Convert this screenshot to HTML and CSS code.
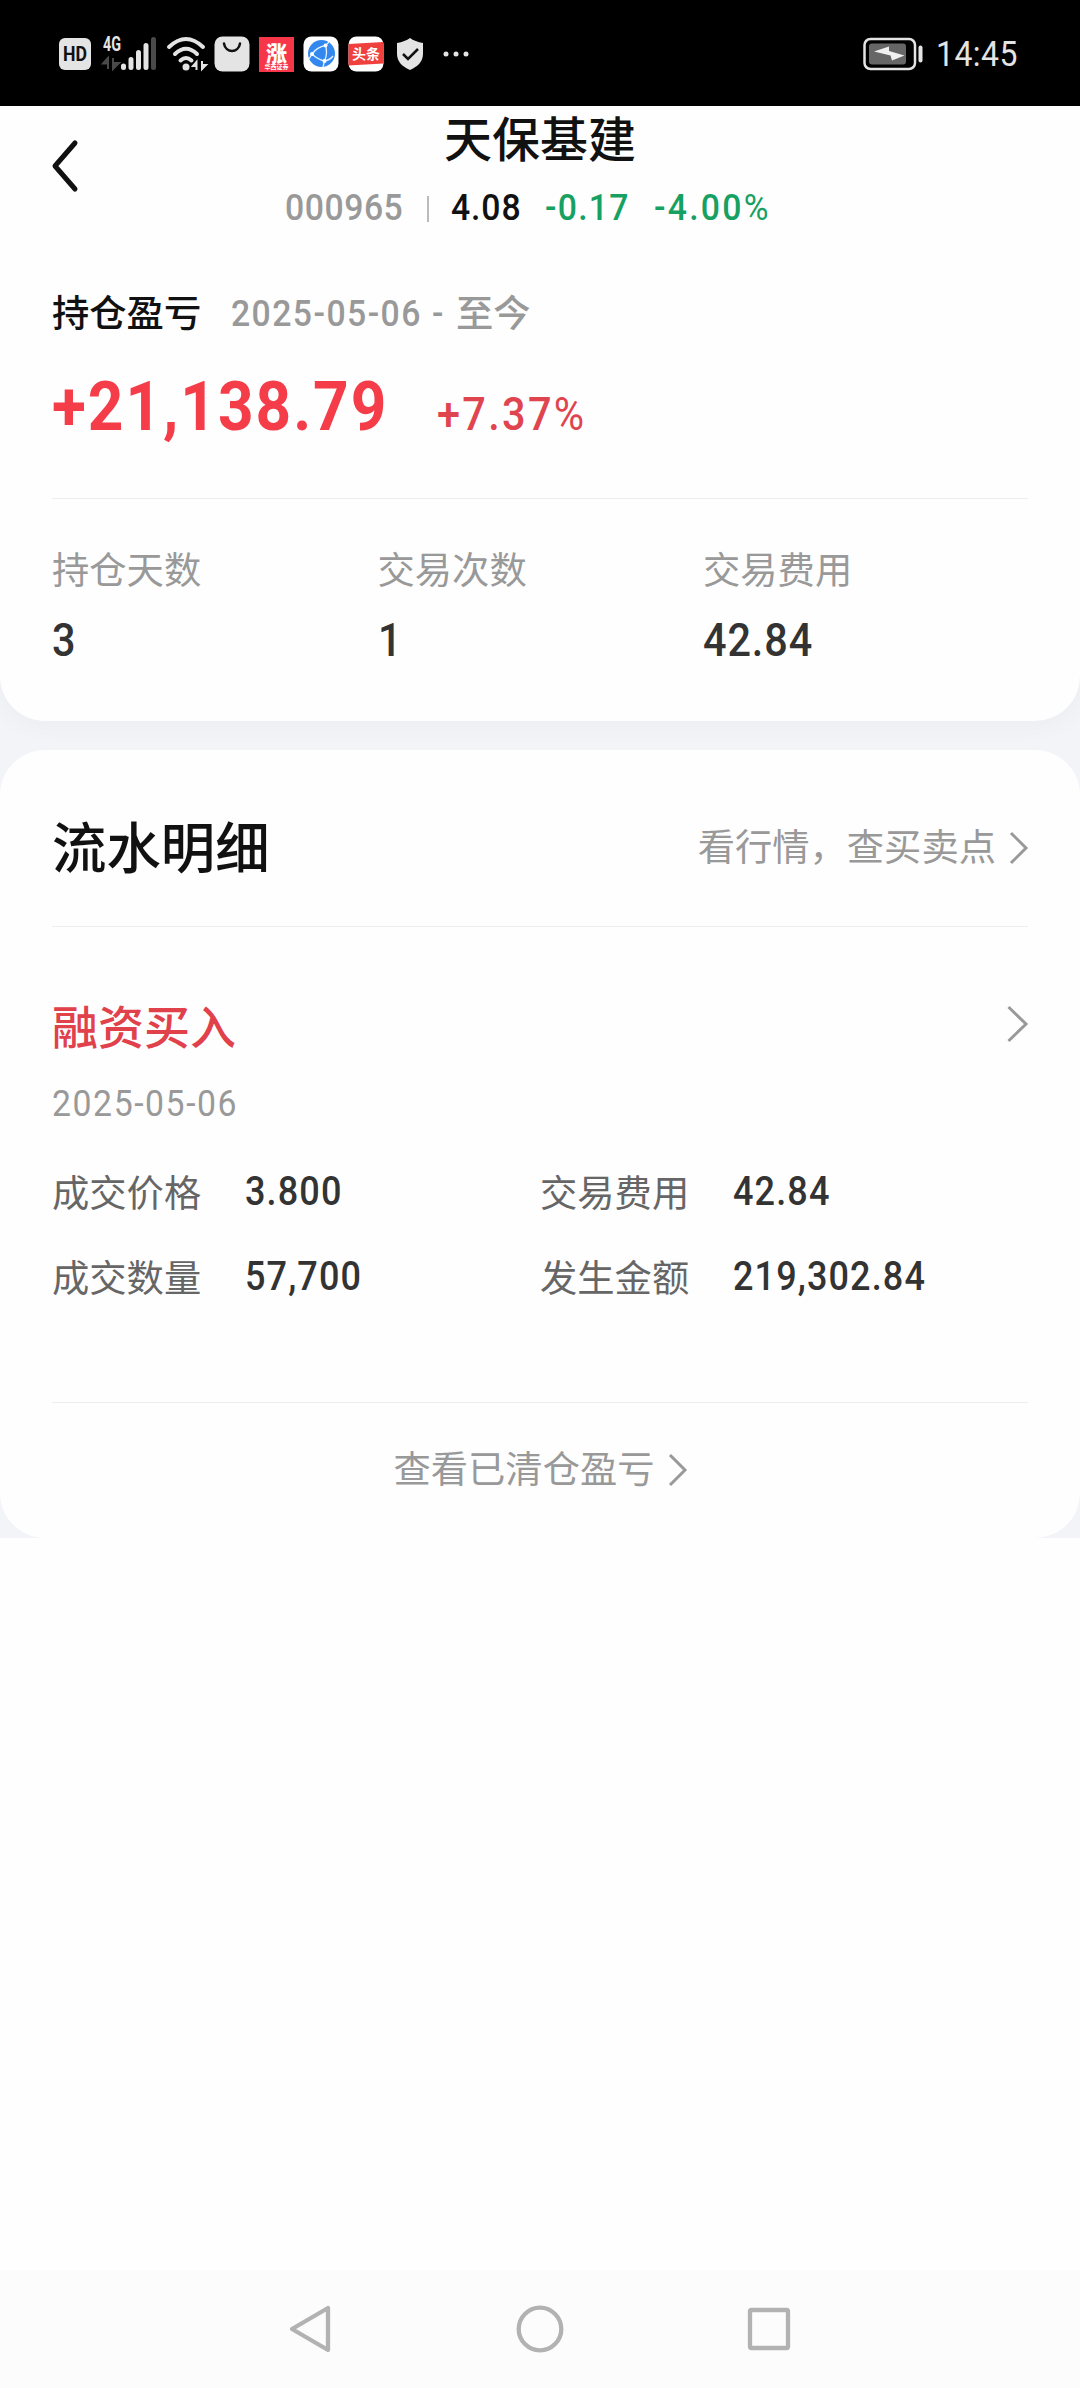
FILE: index.html
```html
<!DOCTYPE html>
<html lang="zh-CN">
<head>
<meta charset="UTF-8">
<title>天保基建</title>
<link rel="stylesheet" href="styles.css">
</head>
<body>
<div class="status-bar">
  <div class="status-icons">
    <svg class="icon-hd" width="34" height="34" viewBox="0 0 34 34"><rect x="1" y="1" width="32" height="32" rx="6" fill="#e4e4e4"/><text x="5" y="24" textLength="24" lengthAdjust="spacingAndGlyphs" class="t-hd">HD</text></svg>
    <svg class="icon-signal" width="56" height="36" viewBox="0 0 56 36"><text x="1" y="15" textLength="18" lengthAdjust="spacingAndGlyphs" class="t-4g">4G</text><path d="M6 22V33M6 22L1 27.500H6ZM11 22V33M11 33L17 27H11Z" stroke="#4a4a4a" stroke-width="2" fill="#4a4a4a"/><g stroke="#e4e4e4" stroke-width="5" stroke-linecap="round"><path d="M21.500 30V31.500M29 23.500V31.500M36.500 16.500V31.500M44 9.500V31.500"/><path d="M51.500 3.500V31.500" stroke="#4a4a4a"/></g></svg>
    <svg class="icon-wifi" width="42" height="36" viewBox="0 0 42 36"><g fill="none" stroke="#e4e4e4" stroke-width="4" stroke-linecap="round"><path d="M3 11Q20 -5 37 11"/><path d="M9 18Q20 7.500 31 18"/><path d="M14.500 24.500Q20 19.500 25.500 24.500"/></g><circle cx="20" cy="31" r="3.500" fill="#e4e4e4"/><path d="M30.500 25V34M30.500 26L27 30H30.500ZM36 25V34M36 33L40 29H36Z" stroke="#e4e4e4" stroke-width="2" fill="#e4e4e4"/></svg>
    <svg class="icon-bag" width="36" height="36" viewBox="0 0 36 36"><rect x=".5" y=".5" width="35" height="35" rx="8" fill="#e4e4e4"/><path d="M10 7.500C11.500 17.500 24.500 17.500 26 7.500" fill="none" stroke="#111" stroke-width="2.500" stroke-linecap="round"/></svg>
    <svg class="icon-zhang" width="35" height="35" viewBox="0 0 35 35"><rect width="35" height="35" fill="#f7364a"/><text x="17.500" y="23.500" text-anchor="middle" class="t-zhang">涨</text><text x="17.500" y="32" text-anchor="middle" class="t-tiny">华西证券</text></svg>
    <svg class="icon-globe" width="36" height="36" viewBox="0 0 36 36"><rect x=".5" y=".5" width="35" height="35" rx="8" fill="#fff"/><circle cx="18.500" cy="17.500" r="13.500" fill="#3388f0"/><g fill="none" stroke="#e5f2ff" stroke-width="1.300"><path d="M9 18Q14 11 22.500 9.500Q25 17 21.500 25Q14 23 9 18M22.500 9.500L26 6M21.500 25Q27 24 30 20M9 18L6 23M21.500 25L20 31"/></g><g fill="#fff"><circle cx="9" cy="18" r="2"/><circle cx="22.500" cy="9.500" r="2"/><circle cx="21.500" cy="25" r="2"/></g></svg>
    <svg class="icon-toutiao" width="36" height="36" viewBox="0 0 36 36"><rect x=".5" y=".5" width="35" height="35" rx="8" fill="#fff"/><path d="M.5 8L35.500 6V27.500L.5 29.500Z" fill="#ef403e"/><text x="18" y="23" text-anchor="middle" class="t-toutiao">头条</text></svg>
    <svg class="icon-shield" width="28" height="34" viewBox="0 0 28 34"><path d="M14 1Q19 4.500 27 6V17C27 25 21 30 14 33C7 30 1 25 1 17V6Q9 4.500 14 1Z" fill="#e4e4e4"/><path d="M7 17L12 22L22 12" fill="none" stroke="#111" stroke-width="2.500"/></svg>
    <svg class="icon-more" width="26" height="6" viewBox="0 0 26 6" fill="#e4e4e4"><circle cx="3" cy="3" r="2.500"/><circle cx="13" cy="3" r="2.500"/><circle cx="23" cy="3" r="2.500"/></svg>
  </div>
  <div class="status-right">
    <svg width="60" height="34" viewBox="0 0 60 34"><rect x="1.500" y="2" width="50.500" height="30" rx="6" fill="none" stroke="#e4e4e4" stroke-width="2.500"/><rect x="6" y="6.500" width="37" height="21" rx="3" fill="#666"/><path d="M11 14.500L26 9.500V14L41.500 18.500L29 23.500L27.500 18.500Z" fill="#f0f0f0"/><rect x="55.500" y="8.500" width="4" height="17" rx="2" fill="#e4e4e4"/></svg>
    <span class="num clock">14:45</span>
  </div>
</div>

<div class="page">
  <section class="card card-top">
    <header class="header">
      <svg class="back" width="30" height="54" viewBox="0 0 30 54"><path d="M25 4L5 27L25 50" fill="none" stroke="#111" stroke-width="5" stroke-linecap="round" stroke-linejoin="round"/></svg>
      <h1 class="title">天保基建</h1>
      <div class="quote">
        <span class="num code">000965</span>
        <i class="bar"></i>
        <span class="num price">4.08</span>
        <span class="num change">-0.17</span>
        <span class="num percent">-4.00<span class="pct">%</span></span>
      </div>
    </header>
    <div class="profit-head">
      <span class="profit-label">持仓盈亏</span>
      <span class="num range">2025-05-06</span>
      <span class="num dash">-</span>
      <span class="now">至今</span>
    </div>
    <div class="profit">
      <span class="num amount">+21,138.79</span>
      <span class="num rate">+7.37<span class="pct">%</span></span>
    </div>
    <div class="stats">
      <div class="stat"><span class="stat-label">持仓天数</span><span class="num stat-value">3</span></div>
      <div class="stat"><span class="stat-label">交易次数</span><span class="num stat-value">1</span></div>
      <div class="stat"><span class="stat-label">交易费用</span><span class="num stat-value">42.84</span></div>
    </div>
  </section>

  <section class="card card-flow">
    <div class="flow-head">
      <h2 class="flow-title">流水明细</h2>
      <a class="link">看行情，查买卖点<svg class="chevron" width="18" height="32" viewBox="0 0 18 32"><path d="M1 1L16 16L1 31"/></svg></a>
    </div>
    <div class="entry">
      <div class="entry-head">
        <h3 class="entry-title">融资买入</h3>
        <svg class="chevron" width="21" height="38" viewBox="0 0 21 38"><path d="M1.500 2L19 19L1.500 36"/></svg>
      </div>
      <div class="num entry-date">2025-05-06</div>
      <div class="details">
        <div class="detail"><span class="key">成交价格</span><span class="num value">3.800</span></div>
        <div class="detail"><span class="key">交易费用</span><span class="num value">42.84</span></div>
        <div class="detail"><span class="key">成交数量</span><span class="num value">57,700</span></div>
        <div class="detail"><span class="key">发生金额</span><span class="num value">219,302.84</span></div>
      </div>
    </div>
    <div class="flow-foot">
      <a class="link">查看已清仓盈亏<svg class="chevron" width="18" height="32" viewBox="0 0 18 32"><path d="M1 1L16 16L1 31"/></svg></a>
    </div>
  </section>
</div>

<nav class="nav-bar">
  <svg width="48" height="48" viewBox="0 0 48 48"><path d="M5 24L41 3V45Z"/></svg>
  <svg width="48" height="48" viewBox="0 0 48 48"><circle cx="24" cy="24" r="21.300"/></svg>
  <svg width="48" height="48" viewBox="0 0 48 48"><rect x="5" y="5" width="38" height="38" rx="1.500"/></svg>
</nav>
</body>
</html>
```
FILE: styles.css
```css
* { box-sizing: border-box; }

body {
  margin: 0;
  width: 1080px;
  height: 2388px;
  display: flex;
  flex-direction: column;
  background: #fefefe;
  color: #111;
  font-family: "Noto Sans CJK SC", sans-serif;
  overflow: hidden;
}

h1, h2, h3 { margin: 0; font-weight: 500; }
svg { display: block; flex: none; overflow: visible; }

/* Figures are set slightly condensed with open tracking */
.num {
  font-family: Roboto, sans-serif;
  font-weight: 500;
  white-space: nowrap;
  transform: scaleX(.9);
  transform-origin: left;
}
.pct { font-weight: 400; }

/* Status bar */
.status-bar {
  height: 106px;
  flex: none;
  display: flex;
  justify-content: space-between;
  padding: 36px 60px 0 58px;
  background: #000;
}
.status-icons { display: flex; align-items: center; height: 36px; }
.icon-signal { margin-left: 10px; }
.icon-wifi { margin-left: 8px; }
.icon-bag { margin-left: 6px; }
.icon-zhang { margin-left: 9px; }
.icon-globe { margin-left: 9px; }
.icon-toutiao { margin-left: 9px; }
.icon-shield { margin-left: 12px; }
.icon-more { margin-left: 19px; }
.status-right { display: flex; align-items: center; height: 36px; }
.clock {
  width: 84px;
  margin-left: 13px;
  font-size: 35.5px;
  font-weight: 400;
  letter-spacing: .5px;
  line-height: 36px;
  color: #e4e4e4;
}
.t-hd { font: 700 20px Roboto, sans-serif; fill: #111; }
.t-4g { font: 700 20px Roboto, sans-serif; fill: #e4e4e4; }
.t-zhang { font: 900 21px "Noto Sans CJK SC", sans-serif; fill: #fff; }
.t-tiny { font: 700 6px "Noto Sans CJK SC", sans-serif; fill: #fff; }
.t-toutiao { font: 700 14px "Noto Sans CJK SC", sans-serif; fill: #fff; }

/* Cards */
.page {
  flex: none;
  display: flex;
  flex-direction: column;
  gap: 29px;
  background: #f3f4f8;
}
.card { background: #fefefe; padding: 0 52px; }
.card-top {
  height: 615px;
  border-radius: 0 0 45px 45px;
  box-shadow: 0 4px 28px rgba(0, 0, 0, .035);
}
.card-flow { position: relative; height: 788px; border-radius: 45px; }

/* Header */
.header { position: relative; height: 180px; }
.back { position: absolute; left: -2px; top: 33px; }
.title { font-size: 48px; line-height: 60px; text-align: center; }
.quote {
  display: flex;
  height: 40px;
  margin: 21px 0 0 233px;
  font-size: 37.5px;
  line-height: 40px;
}
.code { width: 142px; color: #999; letter-spacing: .6px; }
.bar { width: 2px; height: 26px; margin: 9px 22px 0 0; background: #bbb; }
.price { width: 94px; letter-spacing: 1px; }
.change { width: 109px; color: #16a163; letter-spacing: 1.4px; }
.percent { color: #16a163; letter-spacing: 2.5px; }

/* Profit */
.profit-head {
  display: flex;
  height: 50px;
  font-size: 37.3px;
  line-height: 50px;
}
.profit-label { width: 179px; font-weight: 500; }
.range { width: 201px; padding-top: 2px; font-size: 37.5px; letter-spacing: 1.6px; color: #999; }
.dash { width: 24px; padding-top: 2px; color: #999; }
.now { color: #999; font-weight: 500; }
.profit {
  display: flex;
  align-items: baseline;
  height: 132px;
  margin-top: 31px;
  border-bottom: 1px solid #eee;
  line-height: 80px;
}
.amount { width: 385px; font-size: 69px; font-weight: 700; letter-spacing: 2.2px; color: #f53d49; }
.rate { font-size: 46px; letter-spacing: 2.6px; color: #e0444e; }

.stats { display: grid; grid-template-columns: repeat(3, 325.5px); padding-top: 47px; }
.stat { display: flex; flex-direction: column; gap: 25px; }
.stat-label { height: 44px; font-size: 37.3px; line-height: 44px; color: #999; }
.stat-value { height: 50px; font-size: 46px; line-height: 50px; letter-spacing: 1px; color: #333; }

/* Transaction flow */
.flow-head {
  display: flex;
  align-items: center;
  justify-content: space-between;
  height: 177px;
  padding-top: 14px;
  border-bottom: 1px solid #eee;
}
.flow-title { font-size: 54.4px; line-height: 60px; }
.link { display: flex; align-items: center; gap: 14px; font-size: 37.3px; line-height: 44px; color: #999; }
.chevron { fill: none; stroke: #999; stroke-width: 3; }
.link .chevron { position: relative; top: 3px; }
.entry { height: 476px; padding-top: 67px; border-bottom: 1px solid #eee; }
.entry-head { display: flex; align-items: center; justify-content: space-between; height: 60px; }
.entry-title { font-size: 46px; line-height: 60px; color: #e0414b; }
.entry-date { margin-top: 29px; font-size: 37.5px; font-weight: 400; line-height: 40px; letter-spacing: 1.75px; color: #999; }
.details {
  display: grid;
  grid-template-columns: 488px 488px;
  row-gap: 35px;
  margin-top: 43px;
}
.detail { display: flex; height: 50px; line-height: 50px; }
.key { width: 193px; font-size: 37.3px; color: #666; }
.value { padding-top: 1px; font-size: 40px; letter-spacing: 1.25px; color: #333; }
.flow-foot { display: flex; justify-content: center; height: 135px; padding-bottom: 7px; }

/* Navigation bar */
.nav-bar {
  display: flex;
  justify-content: center;
  gap: 181px;
  height: 117px;
  margin-top: auto;
  padding-top: 34px;
  background: #fcfcfc;
}
.nav-bar svg { fill: none; stroke: #b2b2b2; stroke-width: 4.3; stroke-linejoin: round; }
```
